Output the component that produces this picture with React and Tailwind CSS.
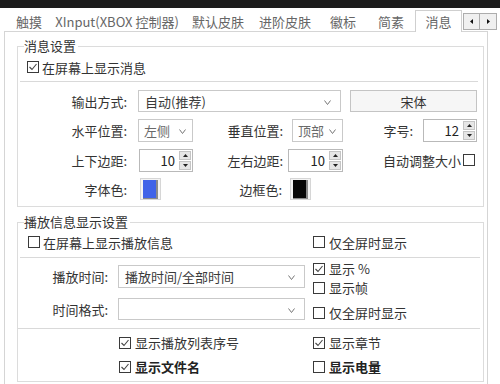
import React from 'react';

const tabs = [
  { label: '触摸', w: 'w-[46px]' },
  { label: 'XInput(XBOX 控制器)', w: 'w-[130px]' },
  { label: '默认皮肤', w: 'w-[72px]' },
  { label: '进阶皮肤', w: 'w-[62px]' },
  { label: '徽标', w: 'w-[54px]' },
  { label: '简素', w: 'w-[42px]' },
];

function Check({ checked, className = '' }) {
  return (
    <span className={`w-[12px] h-[12px] shrink-0 border border-[#3a3a3a] bg-white flex items-center justify-center ${className}`}>
      {checked && (
        <svg width="10" height="10" viewBox="0 0 10 10">
          <polyline points="1.5,5 4,7.5 8.5,2" fill="none" stroke="#444" strokeWidth="1.1" />
        </svg>
      )}
    </span>
  );
}

function CheckLabel({ checked, children, bold }) {
  return (
    <div className="flex items-center h-[17px] gap-[4px]">
      <Check checked={checked} />
      <span className={bold ? 'font-bold text-[#222]' : ''}>{children}</span>
    </div>
  );
}

function Chevron() {
  return (
    <svg width="7" height="5" viewBox="0 0 7 5" className="mt-[2px] shrink-0">
      <polyline points="0.5,0.5 3.5,4.5 6.5,0.5" fill="none" stroke="#777" strokeWidth="1" />
    </svg>
  );
}

function Dropdown({ w, h = 'h-[22px]', text, muted, tight }) {
  return (
    <div className={`${w} ${h} border border-[#c9c9c9] bg-white flex items-center justify-between ${tight ? 'pl-[5px] pr-[6px]' : 'pl-[6px] pr-[9px]'}`}>
      <span className={muted ? 'text-[#6a6a6a]' : 'text-[#3a3a3a]'}>{text}</span>
      <Chevron />
    </div>
  );
}

function Spinner({ w, value }) {
  return (
    <div className={`${w} h-[23px] border border-[#b9b9b9] bg-white flex`}>
      <div className="flex-1 flex items-center justify-end pr-[3px] text-[#222]">{value}</div>
      <div className="w-[14px] flex flex-col gap-[1px] p-[1px]">
        <div className="flex-1 bg-[#e6e6e6] border border-[#c4c4c4] flex items-center justify-center">
          <svg width="5" height="3" viewBox="0 0 5 3"><polygon points="0,3 2.5,0 5,3" fill="#222" /></svg>
        </div>
        <div className="flex-1 bg-[#e6e6e6] border border-[#c4c4c4] flex items-center justify-center">
          <svg width="5" height="3" viewBox="0 0 5 3"><polygon points="0,0 5,0 2.5,3" fill="#222" /></svg>
        </div>
      </div>
    </div>
  );
}

function Swatch({ color }) {
  return (
    <div className="w-[21px] h-[22px] border border-[#d6d6d6] bg-[#f4f4f4] flex items-center justify-center">
      <div className={`w-[15px] h-[19px] ${color} border-r-2 border-b border-[#8a8a8a]`} />
    </div>
  );
}

function Label({ w, children }) {
  return <div className={`${w} text-right shrink-0`}>{children}</div>;
}

export default function App() {
  return (
    <div className="w-[500px] h-[384px] bg-white overflow-hidden font-['Noto_Sans_CJK_SC',sans-serif] text-[13px] leading-none text-[#333]">
      <div className="h-[8px] bg-[#1c1c1c]" />

      {/* tab strip */}
      <div className="h-[23px] flex items-end">
        <div className="w-[6px]" />
        {tabs.map((t) => (
          <div key={t.label} className={`${t.w} h-[20px] flex items-center justify-center text-[#666] whitespace-nowrap`}>
            {t.label}
          </div>
        ))}
        <div className="ml-[3px] w-[47px] h-[22px] mb-[-1px] relative z-10 bg-white border-t border-l border-r border-[#cfcfcf] flex items-center justify-center text-[#666]">
          消息
        </div>
        <div className="ml-[1px] mb-[1px] h-[17px] flex">
          <div className="w-[17px] border border-[#adadad] bg-[#f0f0f0] flex items-center justify-center">
            <svg width="3" height="5" viewBox="0 0 3 5"><polygon points="3,0 0,2.5 3,5" fill="#111" /></svg>
          </div>
          <div className="w-[17px] border border-l-0 border-[#adadad] bg-[#f0f0f0] flex items-center justify-center">
            <svg width="3" height="5" viewBox="0 0 3 5"><polygon points="0,0 3,2.5 0,5" fill="#111" /></svg>
          </div>
        </div>
      </div>

      {/* panel */}
      <div className="ml-[4px] w-[484px] h-[353px] border-t border-l border-r border-[#d5d5d5] pl-[12px] pt-[14px]">
        {/* 消息设置 */}
        <div className="relative w-[467px] h-[161px] border border-[#dcdcdc]">
          <span className="absolute left-[6px] top-[-8px] bg-white pr-[2px]">消息设置</span>
          <div className="pt-[10px] pl-[9px]">
            <div className="flex items-center h-[20px] gap-[3px]">
              <Check checked />
              <span>在屏幕上显示消息</span>
            </div>
          </div>
          <div className="mt-[4px] ml-[2px] w-[458px] h-px bg-[#d9d9d9]" />

          <div className="mt-[8px] h-[22px] flex items-center">
            <Label w="w-[109px]">输出方式:</Label>
            <div className="ml-[11px]">
              <Dropdown w="w-[203px]" text="自动(推荐)" />
            </div>
            <div className="ml-[9px] w-[127px] h-[22px] border border-[#c4c4c4] bg-[#f6f6f6] flex items-center justify-center text-[#333]">
              宋体
            </div>
          </div>

          <div className="mt-[7px] h-[22px] flex items-center">
            <Label w="w-[109px]">水平位置:</Label>
            <div className="ml-[11px]">
              <Dropdown w="w-[55px]" h="h-[23px]" text="左侧" muted tight />
            </div>
            <Label w="w-[90px]">垂直位置:</Label>
            <div className="ml-[9px]">
              <Dropdown w="w-[51px]" h="h-[23px]" text="顶部" muted tight />
            </div>
            <Label w="w-[70px]">字号:</Label>
            <div className="ml-[10px]">
              <Spinner w="w-[54px]" value="12" />
            </div>
          </div>

          <div className="mt-[8px] h-[22px] flex items-center">
            <Label w="w-[109px]">上下边距:</Label>
            <div className="ml-[12px]">
              <Spinner w="w-[54px]" value="10" />
            </div>
            <Label w="w-[90px]">左右边距:</Label>
            <div className="ml-[5px]">
              <Spinner w="w-[55px]" value="10" />
            </div>
            <Label w="w-[118px]">自动调整大小</Label>
            <Check className="ml-[2px]" />
          </div>

          <div className="mt-[7px] h-[22px] flex items-center">
            <Label w="w-[109px]">字体色:</Label>
            <div className="ml-[13px]">
              <Swatch color="bg-[#4063e8]" />
            </div>
            <Label w="w-[121px]">边框色:</Label>
            <div className="ml-[8px]">
              <Swatch color="bg-[#080808]" />
            </div>
          </div>
        </div>

        {/* 播放信息显示设置 */}
        <div className="relative mt-[15px] w-[467px] h-[160px] border border-[#dcdcdc]">
          <span className="absolute left-[6px] top-[-8px] bg-white pr-[2px]">播放信息显示设置</span>
          <div className="pt-[9px] flex">
            <div className="w-[295px] pl-[10px]">
              <div className="flex items-center h-[20px] gap-[3px]">
                <Check />
                <span>在屏幕上显示播放信息</span>
              </div>
            </div>
            <div className="flex items-center h-[20px] gap-[4px]">
              <Check />
              <span>仅全屏时显示</span>
            </div>
          </div>
          <div className="mt-[5px] ml-[2px] w-[460px] h-px bg-[#d9d9d9]" />

          <div className="flex">
            <div className="w-[295px]">
              <div className="mt-[7px] h-[23px] flex items-center">
                <Label w="w-[90px]">播放时间:</Label>
                <div className="ml-[10px]">
                  <Dropdown w="w-[187px]" h="h-[23px]" text="播放时间/全部时间" />
                </div>
              </div>
              <div className="mt-[10px] h-[22px] flex items-center">
                <Label w="w-[90px]">时间格式:</Label>
                <div className="ml-[10px]">
                  <Dropdown w="w-[187px]" text="" />
                </div>
              </div>
            </div>
            <div>
              <div className="mt-[2px]">
                <CheckLabel checked>显示 %</CheckLabel>
              </div>
              <div className="mt-[2px]">
                <CheckLabel>显示帧</CheckLabel>
              </div>
              <div className="mt-[8px]">
                <CheckLabel>仅全屏时显示</CheckLabel>
              </div>
            </div>
          </div>
          <div className="mt-[7px] w-[462px] h-px bg-[#d9d9d9]" />

          <div className="mt-[5px] flex">
            <div className="w-[295px] pl-[101px]">
              <CheckLabel checked>显示播放列表序号</CheckLabel>
            </div>
            <CheckLabel checked>显示章节</CheckLabel>
          </div>
          <div className="mt-[7px] flex">
            <div className="w-[295px] pl-[101px]">
              <CheckLabel checked bold>显示文件名</CheckLabel>
            </div>
            <CheckLabel bold>显示电量</CheckLabel>
          </div>
        </div>
      </div>
    </div>
  );
}
